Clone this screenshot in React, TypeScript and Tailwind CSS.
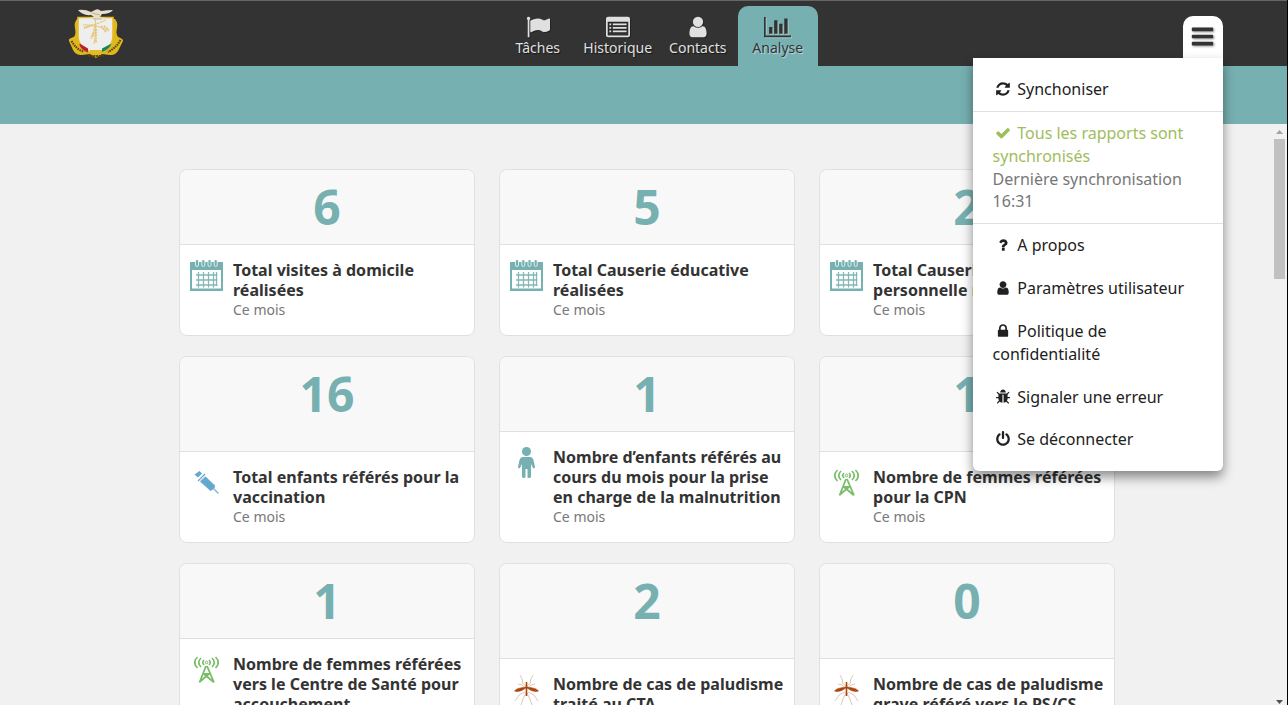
import type { ReactNode } from "react";

const PATHS = {
  flag: "M320 256q0 72-64 110v1266q0 13-9.5 22.5t-22.5 9.5h-64q-13 0-22.5-9.5t-9.5-22.5v-1266q-64-38-64-110 0-53 37.5-90.5t90.5-37.5 90.5 37.5 37.5 90.5zm1472 64v763q0 25-12.5 38.5t-39.5 27.5q-215 116-369 116-61 0-123.5-22t-108.5-48-115.5-48-142.5-22q-192 0-464 146-17 9-33 9-26 0-45-19t-19-45v-742q0-32 31-55 21-14 79-43 236-120 421-120 107 0 200 29t219 88q38 19 88 19 54 0 117.5-21t110-47 88-47 54.5-21q26 0 45 19t19 45z",
  list: "M160 128H1632Q1792 128 1792 288V1504Q1792 1664 1632 1664H160Q0 1664 0 1504V288Q0 128 160 128ZM128 512V1504Q128 1536 160 1536H1632Q1664 1536 1664 1504V512ZM256 640h128v128h-128zM512 640h1024v128h-1024zM256 896h128v128h-128zM512 896h1024v128h-1024zM256 1152h128v128h-128zM512 1152h1024v128h-1024z",
  user: "M1536 1399q0 109-62.5 187t-150.5 78h-854q-88 0-150.5-78t-62.5-187q0-85 8.5-160.5t31.5-152 58.5-131 94-89 134.5-34.5q131 128 313 128t313-128q76 0 134.5 34.5t94 89 58.5 131 31.5 152 8.5 160.5zm-256-887q0 159-112.5 271.5t-271.5 112.5-271.5-112.5-112.5-271.5 112.5-271.5 271.5-112.5 271.5 112.5 112.5 271.5z",
  chart: "M640 896v512h-256v-512h256zm384-512v1024h-256v-1024h256zm1024 1152v128h-2048v-1536h128v1408h1920zm-640-896v768h-256v-768h256zm384-384v1152h-256v-1152h256z",
  bars: "M1664 1344v128q0 26-19 45t-45 19h-1408q-26 0-45-19t-19-45v-128q0-26 19-45t45-19h1408q26 0 45 19t19 45zm0-512v128q0 26-19 45t-45 19h-1408q-26 0-45-19t-19-45v-128q0-26 19-45t45-19h1408q26 0 45 19t19 45zm0-512v128q0 26-19 45t-45 19h-1408q-26 0-45-19t-19-45v-128q0-26 19-45t45-19h1408q26 0 45 19t19 45z",
  refresh: "M1639 1056q0 5-1 7-64 268-268 434.5t-478 166.5q-146 0-282.5-55t-243.5-157l-129 129q-19 19-45 19t-45-19-19-45v-448q0-26 19-45t45-19h448q26 0 45 19t19 45-19 45l-137 137q71 66 161 102t187 36q134 0 250-65t186-179q11-17 53-117 8-23 30-23h192q13 0 22.5 9.5t9.5 22.5zm25-800v448q0 26-19 45t-45 19h-448q-26 0-45-19t-19-45 19-45l138-138q-148-137-349-137-134 0-250 65t-186 179q-11 17-53 117-8 23-30 23h-199q-13 0-22.5-9.5t-9.5-22.5v-7q65-268 270-434.5t480-166.5q146 0 284 55.5t245 156.5l130-129q19-19 45-19t45 19 19 45z",
  check: "M1671 566q0 40-28 68l-724 724-136 136q-28 28-68 28t-68-28l-136-136-362-362q-28-28-28-68t28-68l136-136q28-28 68-28t68 28l294 295 656-657q28-28 68-28t68 28l136 136q28 28 28 68z",
  question: "M1088 1256v240q0 16-12 28t-28 12h-240q-16 0-28-12t-12-28v-240q0-16 12-28t28-12h240q16 0 28 12t12 28zm316-600q0 54-15.5 101t-35 76.5-55 59.5-57.5 43.5-61 35.5q-41 23-68.5 65t-27.5 67q0 17-12 32.5t-28 15.5h-240q-15 0-25.5-18.5t-10.5-37.5v-45q0-83 65-156.5t143-108.5q59-27 84-56t25-76q0-42-46.5-74t-107.5-32q-65 0-108 29-35 25-107 115-13 16-31 16-12 0-25-8l-164-125q-13-10-15.5-25t5.5-28q160-266 464-266 80 0 161 31t146 83 106 127.5 41 158.5z",
  lock: "M640 768h512v-192q0-106-75-181t-181-75-181 75-75 181v192zm832 96v576q0 40-28 68t-68 28h-960q-40 0-68-28t-28-68v-576q0-40 28-68t68-28h32v-192q0-184 132-316t316-132 316 132 132 316v192h32q40 0 68 28t28 68z",
  bug: "M1696 960q0 26-19 45t-45 19h-224q0 171-67 290l208 209q19 19 19 45t-19 45q-18 19-45 19t-45-19l-198-197q-5 5-15 13t-42 28.5-65 36.5-82 29-97 13v-896h-128v896q-51 0-101.5-13.5t-87-33-66-39-43.5-32.5l-15-14-183 207q-20 21-48 21-24 0-43-16-19-18-20.5-44.5t15.5-46.5l202-227q-58-114-58-274h-224q-26 0-45-19t-19-45 19-45 45-19h224v-294l-173-173q-19-19-19-45t19-45 45-19 45 19l173 173h844l173-173q19-19 45-19t45 19 19 45-19 45l-173 173v294h224q26 0 45 19t19 45zm-480-576h-640q0-133 93.5-226.5t226.5-93.5 226.5 93.5 93.5 226.5z",
  power: "M1664 896q0 156-61 298t-164 245-245 164-298 61-298-61-245-164-164-245-61-298q0-182 80.5-343t226.5-270q43-32 95.5-25t83.5 50q32 42 24.5 94.5t-49.5 84.5q-98 74-151.5 181t-53.5 228q0 104 40.5 198.5t109.5 163.5 163.5 109.5 198.5 40.5 198.5-40.5 163.5-109.5 109.5-163.5 40.5-198.5q0-121-53.5-228t-151.5-181q-42-32-49.5-84.5t24.5-94.5q31-43 84-50t95 25q146 109 226.5 270t80.5 343zm-640-768v640q0 52-38 90t-90 38-90-38-38-90v-640q0-52 38-90t90-38 90 38 38 90z",
};
type Glyph = keyof typeof PATHS;

function Icon({ name, className, wide = false }: { name: Glyph; className: string; wide?: boolean }) {
  return (
    <svg viewBox={wide ? "0 0 2048 1792" : "0 0 1792 1792"} className={className} fill="currentColor" fillRule={name === "list" ? "evenodd" : "nonzero"} aria-hidden="true">
      <path d={PATHS[name]} />
    </svg>
  );
}

function Crest() {
  return (
    <svg viewBox="0 0 56 50" className="h-[50px] w-14" aria-hidden="true">
      <path d="M9 11C4 17 9 22 7 27C6 31 0 29 1 33L5 42C7 46 10 47 14 47L22 46L28 50L34 46L42 47C47 47 49 45 51 41L55 33C55 29 50 31 49 27C47 22 52 17 47 11Z" fill="#dfb61c" />
      <path d="M3.500 33Q8 41 16 44M52.500 32Q48 40 40 44" fill="none" stroke="#57470f" strokeWidth="2" strokeDasharray="1.6 .8" />
      <path d="M20 47.500Q28 48.500 36 47.500" fill="none" stroke="#57470f" strokeWidth="1.800" strokeDasharray="2 .7" />
      <path d="M10 9.500H45V28Q45 41 28 46Q10 41 10 28Z" fill="#eeeeed" stroke="#e4bd25" strokeWidth="1.600" />
      <path d="M11.500 35.500L20 40.500V44.500Q13 42 11.500 37Z" fill="#bd1e34" />
      <path d="M22 42H34V44.500L28 46L22 44.500Z" fill="#e5b928" />
      <path d="M34 40.500L43.500 35.500Q42 41 34 44Z" fill="#128660" />
      <path d="M15 17Q28 16 41 23M38 12Q24 18 16 20M27 11Q29 20 26 36" fill="none" stroke="#dfbd66" strokeWidth=".8" />
      <path d="M27 18L25 29M28 21L28 35M25 25L23 31M33 18L38 24M25 17L16 20M36 18L41 22" fill="none" stroke="#e3c575" strokeWidth="1.800" strokeDasharray="2 .8" />
      <path d="M10 2Q17 1 23 4L27 2Q30 0 33 3Q39 2 45 2Q42 6 34 6L32 9L38 10Q29 12 20 10L26 9L23 7Q15 8 10 2Z" fill="#e6dfcc" />
      <path d="M24 5L32 7M25 11H34" stroke="#c1aa70" strokeWidth=".8" />
    </svg>
  );
}

function Calendar() {
  return (
    <svg viewBox="0 0 33 32" className="h-8 w-[33px]" aria-hidden="true">
      <path d="M0 2H33V31H0Z" fill="#77b0b1" />
      <path d="M2 10H31V28.5H2Z" fill="#fff" />
      <path d="M8.500 12V27.500M13.500 12V27.500M18.500 12V27.500M23.500 12V27.500M26.500 12V26M6 15H27.500M6 20H27.500M6 25H27.500" stroke="#84b8b8" strokeWidth="1.300" />
      <g fill="#77b0b1" stroke="#e6f2f2" strokeWidth=".9"><rect x="5.500" y="-.5" width="3" height="7" rx="1.500" /><rect x="11.800" y="-.5" width="3" height="7" rx="1.500" /><rect x="18" y="-.5" width="3" height="7" rx="1.500" /><rect x="24.200" y="-.5" width="3" height="7" rx="1.500" /></g>
    </svg>
  );
}

function Syringe() {
  return (
    <svg viewBox="0 0 33 32" className="h-8 w-[33px]" aria-hidden="true">
      <path d="M4.500 7.500L9.500 4L12 6.500L8 10.500Z" fill="#64a7cf" />
      <path d="M8 14L15 7" stroke="#64a7cf" strokeWidth="1.1" />
      <path d="M10 14.500L15.500 9.500L25 18.500L24.500 21.500L20.500 24Z" fill="#64a7cf" />
      <path d="M9 14.500L16 8.500" stroke="#b8d7e8" strokeWidth=".6" />
      <path d="M23 21L28.500 26.500" stroke="#84b9d7" strokeWidth="1.5" />
    </svg>
  );
}

function Child() {
  return (
    <svg viewBox="0 0 33 32" className="h-8 w-[33px]" fill="#77b0b1" aria-hidden="true">
      <circle cx="16.5" cy="4.5" r="4.5" />
      <path d="M13 10H20Q22.5 10 23.5 13L25 20Q25 22 23 21L21 17V29.5Q21 31 19 31T17.5 29.5V22H15.5V29.5Q15.5 31 13.8 31T12 29.5V17L10 21Q8 22 8 20L9.5 13Q10.5 10 13 10Z" />
    </svg>
  );
}

function Tower() {
  return (
    <svg viewBox="0 0 33 32" className="h-8 w-[33px]" fill="none" stroke="#79bd68" strokeWidth="1.8" aria-hidden="true">
      <path d="M7.500 3Q2 8.500 7.500 14M11 4Q6.500 8.500 11 13M14 6Q11.500 8.500 14 11M25.500 3Q31 8.500 25.500 14M22 4Q26.500 8.500 22 13M19 6Q21.500 8.500 19 11" strokeWidth="1.600" />
      <circle cx="16.500" cy="8.500" r="1.300" strokeWidth="1" />
      <path d="M16 12L9.500 28.500M17 12L24 28.500M14 20H19L9.500 28M14 20L23.500 28" />
    </svg>
  );
}

function Mosquito() {
  return (
    <svg viewBox="0 0 33 32" className="h-8 w-[33px]" fill="none" aria-hidden="true">
      <path d="M16 12L12.500 9V6L10 1M17 12L20.500 9V6L23 1M15 14L12 11L8 10M18 14L21 11L25 10M15 18L9 21L5 27M18 18L24 21L28 27M16 19L13 25L11 31M17 19L20 25L22 31" stroke="#d8b29f" strokeWidth=".75" />
      <path d="M16.500 8V22" stroke="#a9470f" strokeWidth="1.600" />
      <path d="M16 13Q6 14 4.500 17Q9 19 16 14ZM17 13Q27 14 28.500 17Q24 19 17 14Z" fill="#a9470f" stroke="#a9470f" strokeWidth=".5" />
    </svg>
  );
}

function Tab({ icon, label, active = false, wide = false }: { icon: Glyph; label: string; active?: boolean; wide?: boolean }) {
  return (
    <a className={active ? "flex h-[60px] w-20 flex-col items-center rounded-t-[10px] bg-[#77b0b1] pt-2 pr-[.5px] text-[#333] [text-shadow:1px_1px_1px_rgba(255,255,255,.55)]" : "flex h-[60px] w-20 flex-col items-center pt-2 pr-[.5px] text-[#e0e0e0] [text-shadow:1px_1px_1px_rgba(0,0,0,.6)]"}>
      <Icon name={icon} wide={wide} className={wide ? "mt-px h-6 w-[27px] drop-shadow-[1px_1px_0_rgba(255,255,255,.35)]" : "mt-px h-6 w-6 drop-shadow-[1px_1px_0_rgba(0,0,0,.3)]"} />
      <span className="text-sm leading-[18px]">{label}</span>
    </a>
  );
}

function Card({ value, title, icon }: { value: string; title: ReactNode; icon: ReactNode }) {
  return (
    <article className="flex flex-col overflow-hidden rounded-lg border border-[#e0e0e0] bg-white">
      <div className="min-h-[74px] grow bg-[#f8f8f8] pt-0.5 text-center text-[48px] leading-[69px] font-bold text-[#77b0b1]">{value}</div>
      <div className="flex shrink-0 gap-2.5 border-t border-[#e0e0e0] px-2.5 py-[15px]">
        <div className="w-[33px] shrink-0">{icon}</div>
        <div>
          <h2 className="text-base leading-5 font-bold tracking-[.016px] whitespace-nowrap text-[#333]">{title}</h2>
          <p className="text-sm leading-5 text-[#777]">Ce mois</p>
        </div>
      </div>
    </article>
  );
}

function MenuItem({ icon, last = false, children }: { icon: Glyph; last?: boolean; children: ReactNode }) {
  return (
    <a className={last ? "block pt-[9.6px] pr-5 pb-[10.4px] pl-[19.6px]" : "block py-2.5 pr-5 pl-[19.6px]"}>
      <span className="mr-[4.2px] inline-flex w-[20.5px] justify-center align-[-2px]"><Icon name={icon} className="size-4" /></span>
      {children}
    </a>
  );
}

export default function App() {
  return (
    <div className="relative flex h-[705px] w-[1288px] flex-col overflow-hidden border-r border-black bg-[#f1f1f1] font-['Noto_Sans',sans-serif] text-[#333]">
      <header className="flex h-[66px] shrink-0 border-t border-[#666] bg-[#333]">
        <div className="w-[498px] pt-[7px] pl-[68px]"><Crest /></div>
        <nav className="flex pt-[5px]">
          <Tab icon="flag" label="Tâches" />
          <Tab icon="list" label="Historique" />
          <Tab icon="user" label="Contacts" />
          <Tab icon="chart" label="Analyse" active wide />
        </nav>
        <button className="mt-[15px] ml-[365px] flex h-[43px] w-10 justify-center rounded-t-[10px] bg-white pt-2 pr-0.5" aria-label="Menu">
          <Icon name="bars" className="size-[25px] drop-shadow-[1px_1px_1px_rgba(0,0,0,.4)]" />
        </button>
      </header>
      <div className="h-[58px] shrink-0 bg-[#77b0b1]" />
      <main className="flex min-h-0 grow justify-between">
        <div className="grid h-max grid-cols-[296px_296px_296px] grid-rows-[167px_187px_187px] gap-x-6 gap-y-5 pt-[45px] pl-[179px]">
          <Card value="6" icon={<Calendar />} title={<>Total visites à domicile<br />réalisées</>} />
          <Card value="5" icon={<Calendar />} title={<>Total Causerie éducative<br />réalisées</>} />
          <Card value="2" icon={<Calendar />} title={<>Total Causerie<br />personnelle réalisées</>} />
          <Card value="16" icon={<Syringe />} title={<>Total enfants référés pour la<br />vaccination</>} />
          <Card value="1" icon={<Child />} title={<>Nombre d’enfants référés au<br />cours du mois pour la prise<br />en charge de la malnutrition</>} />
          <Card value="1" icon={<Tower />} title={<>Nombre de femmes référées<br />pour la CPN</>} />
          <Card value="1" icon={<Tower />} title={<>Nombre de femmes référées<br />vers le Centre de Santé pour<br />accouchement</>} />
          <Card value="2" icon={<Mosquito />} title={<>Nombre de cas de paludisme<br />traité au CTA</>} />
          <Card value="0" icon={<Mosquito />} title={<>Nombre de cas de paludisme<br />grave référé vers le PS/CS</>} />
        </div>
        <div className="flex w-[15px] shrink-0 flex-col items-center justify-between bg-[#f1f1f1]">
          <div className="flex flex-col items-center">
            <svg viewBox="0 0 15 15" className="size-[15px]" aria-hidden="true"><path d="M4 10L7.500 6L11 10Z" fill="#a3a3a3" /></svg>
            <div className="h-[140px] w-[11px] bg-[#c1c1c1]" />
          </div>
          <svg viewBox="0 0 15 8" className="h-2 w-[15px]" aria-hidden="true"><path d="M4 3H11L7.500 7Z" fill="#505050" /></svg>
        </div>
      </main>
      <div className="absolute top-[58px] left-[973px] w-[250px] rounded-b-md bg-white py-2.5 text-base leading-[22.857px] text-[#212121] shadow-[0_6px_12px_rgba(0,0,0,.45)]">
        <MenuItem icon="refresh">Synchoniser</MenuItem>
        <div className="border-y border-[#e0e0e0]">
          <div className="pt-2.5 pr-5 pb-2.5 pl-[19.6px]">
            <p className="text-[#a0bd5c]"><span className="mr-[4.2px] inline-flex w-[20.5px] justify-center align-[-2px]"><Icon name="check" className="size-4" /></span>Tous les rapports sont synchronisés</p>
            <p className="text-[#777]">Dernière synchronisation 16:31</p>
          </div>
        </div>
        <MenuItem icon="question">A propos</MenuItem>
        <MenuItem icon="user">Paramètres utilisateur</MenuItem>
        <MenuItem icon="lock">Politique de confidentialité</MenuItem>
        <MenuItem icon="bug">Signaler une erreur</MenuItem>
        <MenuItem icon="power" last>Se déconnecter</MenuItem>
      </div>
    </div>
  );
}
